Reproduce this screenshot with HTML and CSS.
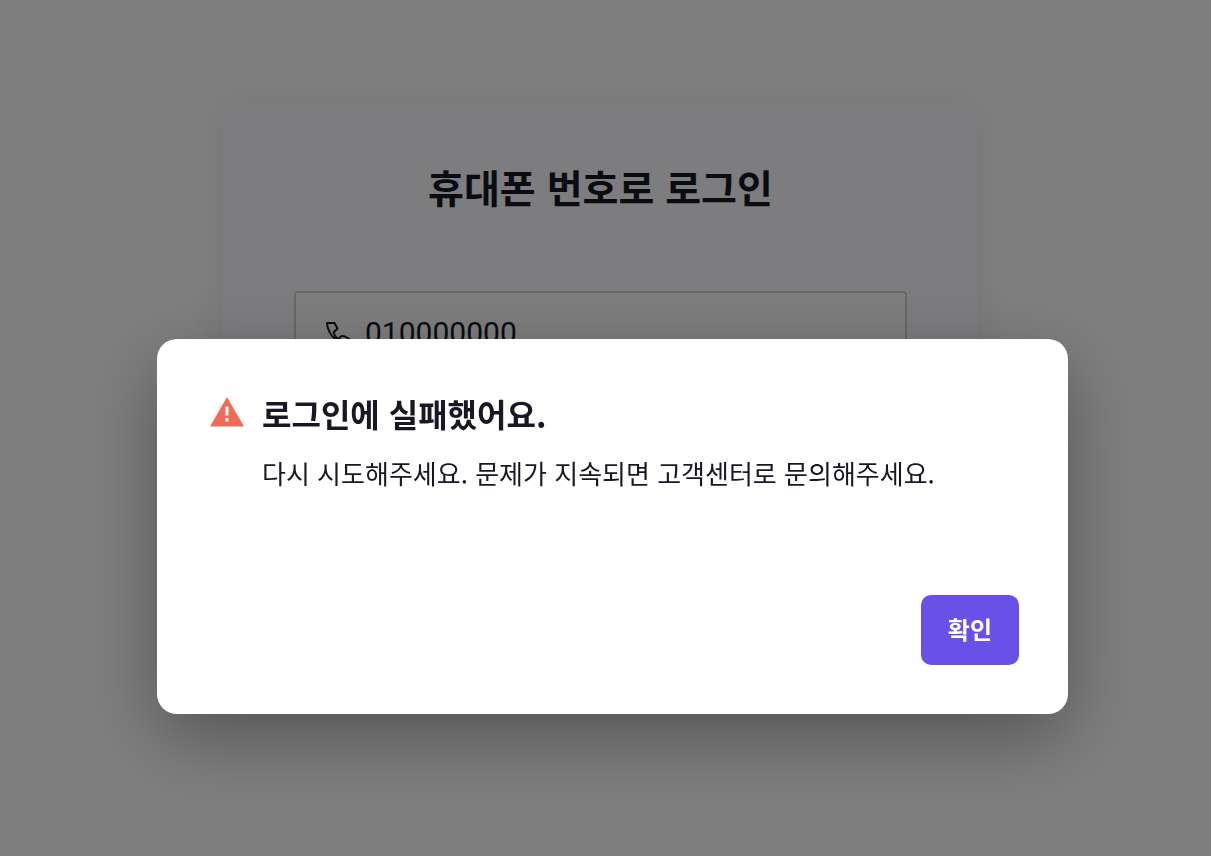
FILE: index.html
```html
<!DOCTYPE html>
<html lang="ko">
<head>
<meta charset="utf-8">
<meta name="viewport" content="width=device-width, initial-scale=1">
<title>휴대폰 번호로 로그인</title>
<link rel="stylesheet" href="styles.css">
</head>
<body>
<main class="page">
  <form class="card">
    <h1 class="card-title">휴대폰 번호로 로그인</h1>
    <div class="field">
      <svg class="field-icon" viewBox="0 0 28 28" aria-hidden="true">
        <path d="M3 5h7.500l3 5.500-4 4c1 3.500 3.500 6 6.500 8l-.500-3c1.500-1.500 3.500-2 5.500-1l5 3v5C15 27 4 18 3 5z"/>
      </svg>
      <input class="field-input" type="tel" value="010000000" aria-label="휴대폰 번호">
    </div>
  </form>
</main>
<div class="overlay">
  <dialog class="dialog" open aria-labelledby="dialog-title" aria-describedby="dialog-text">
    <svg class="warning" viewBox="0 0 34 30" aria-hidden="true">
      <path class="warning-shape" d="M17 0 34 29.500H0z"/>
      <path class="warning-mark" d="M15.500 9.500h3v9h-3zM15.500 21h3v3.500h-3z"/>
    </svg>
    <div class="dialog-body">
      <h2 class="dialog-title" id="dialog-title">로그인에 실패했어요.</h2>
      <p class="dialog-text" id="dialog-text">다시 시도해주세요. 문제가 지속되면 고객센터로 문의해주세요.</p>
    </div>
    <div class="dialog-actions">
      <button class="confirm" type="button">확인</button>
    </div>
  </dialog>
</div>
</body>
</html>
```
FILE: styles.css
```css
* {
  box-sizing: border-box;
}

body {
  margin: 0;
  background: #fff;
  color: #171725;
  font-family: "Noto Sans CJK KR", sans-serif;
}

.page {
  min-height: 100vh;
  padding: 102px 234px 100px 222px;
}

.card {
  min-height: 600px;
  padding: 54px 70px 56px 72px;
  border-radius: 16px;
  background: #fbfbff;
  box-shadow: 0 0 40px rgba(0, 0, 0, 0.08);
}

.card-title {
  margin: 0 0 75px;
  font-size: 39px;
  line-height: 60px;
  font-weight: 700;
  text-align: center;
}

.field {
  display: flex;
  align-items: center;
  gap: 13px;
  height: 82px;
  padding: 0 28px;
  border: 2px solid #d0d0d0;
  border-radius: 4px;
  background: #fdfdfd;
}

.field-icon {
  flex: none;
  width: 28px;
  height: 28px;
  fill: none;
  stroke: #171725;
  stroke-width: 2;
  stroke-linejoin: round;
}

.field-input {
  flex: 1;
  min-width: 0;
  padding: 0;
  border: 0;
  background: transparent;
  color: #171725;
  font: 30px Roboto, sans-serif;
}

.overlay {
  position: fixed;
  inset: 0;
  display: flex;
  align-items: flex-end;
  padding: 0 143px 142px 157px;
  background: rgba(0, 0, 0, 0.5);
}

.dialog {
  position: static;
  display: grid;
  grid-template-columns: 34px 1fr;
  column-gap: 18px;
  width: 100%;
  margin: 0;
  padding: 50px 49px 49px 53px;
  border: 0;
  border-radius: 20px;
  background: #fff;
  color: #171725;
  box-shadow: 0 24px 76px rgba(0, 0, 0, 0.34);
}

.warning {
  width: 34px;
  height: 30px;
  margin-top: 8px;
}

.warning-shape {
  fill: #f06a58;
}

.warning-mark {
  fill: #fff;
}

.dialog-title {
  margin: 0 0 12px;
  font-size: 32px;
  line-height: 48px;
  font-weight: 700;
}

.dialog-text {
  margin: 0;
  font-size: 26px;
  line-height: 48px;
}

.dialog-actions {
  grid-column: 1 / -1;
  display: flex;
  justify-content: flex-end;
  margin-top: 98px;
}

.confirm {
  height: 70px;
  padding: 0 27px 4px;
  border: 0;
  border-radius: 10px;
  background: #6950e8;
  color: #fff;
  font: 700 24px "Noto Sans CJK KR", sans-serif;
}
```
